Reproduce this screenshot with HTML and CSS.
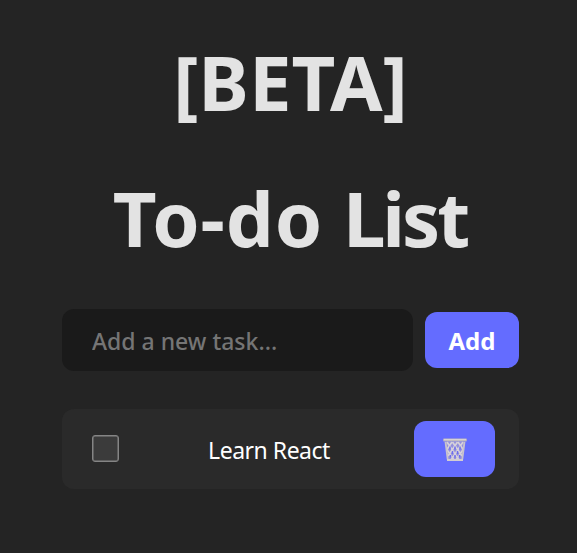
FILE: index.html
```html
<!DOCTYPE html>
<html lang="en">
<head>
<meta charset="utf-8">
<title>To-do List</title>
<link rel="stylesheet" href="styles.css">
</head>
<body>
<main class="app">
  <h1 class="title title-beta">[BETA]</h1>
  <h1 class="title title-name"><span class="word-wide">To-do</span> <span class="word-tight">List</span></h1>
  <form class="task-form">
    <input class="task-input" type="text" placeholder="Add a new task...">
    <button class="button add-button" type="button">Add</button>
  </form>
  <ul class="task-list">
    <li class="task">
      <input class="task-check" type="checkbox" aria-label="Done">
      <span class="task-name">Learn React</span>
      <button class="button delete-button" type="button" aria-label="Delete">
        <svg class="trash" width="26" height="26" viewBox="0 0 26 26" fill="none">
          <path d="M3.2 4.5 5.5 23H20.5L22.8 4.5Z" fill="#a39bd2" fill-opacity=".75"/>
          <path d="M5 5 17 23M10.500 5 20 19M16 5 21.500 13M4.500 12 12 23M21 5 9 23M15.500 5 6 19M10 5 4.500 13M21.500 12 14 23" stroke="#d6d1da" stroke-width="1.700"/>
          <path d="M8 9.500v3M13 9.500v3M18 9.500v3M10.500 14v3M15.500 14v3M8.500 18v2.500M13 18v2.500M17.500 18v2.500" stroke="#6c6cf0" stroke-width="1.400"/>
          <path d="M3.500 5 5.700 22.500M22.500 5 20.300 22.500" stroke="#c9c3cc" stroke-width="1.800"/>
          <path d="M5 23H21" stroke="#d3cdd2" stroke-width="2"/>
          <rect x="1.200" y="1.500" width="23.600" height="3" rx=".7" fill="#bdb7bc"/>
          <path d="M2 2.700H24" stroke="#ddd8dc"/>
        </svg>
      </button>
    </li>
  </ul>
</main>
</body>
</html>
```

FILE: styles.css
```css
* { box-sizing: border-box; }

body {
  margin: 0;
  min-height: 553px;
  background: #242424;
  color: #fff;
  font-family: "Segoe UI", "Noto Sans", sans-serif;
  font-size: 23px;
}

.app {
  width: 457px;
  margin-left: 62px;
  padding-top: 40px;
}

.title {
  margin: 0 0 52px;
  height: 84px;
  line-height: 84px;
  font-size: 76px;
  font-weight: 700;
  text-align: center;
  white-space: nowrap;
  color: #e3e3e3;
}

.title-name { margin-bottom: 49px; }

.word-wide { letter-spacing: .9px; }

.word-tight {
  letter-spacing: -3px;
  margin-right: 1px;
}

.task-form {
  display: flex;
  align-items: center;
  gap: 12px;
  margin: 0 0 38px;
}

.task-input {
  flex: 1;
  min-width: 0;
  height: 62px;
  padding: 2px 30px 0;
  border: 0;
  border-radius: 12px;
  background: #1a1a1a;
  color: #fff;
  font: 500 23px "Segoe UI", "Noto Sans", sans-serif;
}

.task-input::placeholder { color: #757575; }

.button {
  display: flex;
  align-items: center;
  justify-content: center;
  height: 56px;
  padding: 0;
  border: 0;
  border-radius: 12px;
  background: #646cff;
  color: #fff;
  font: 700 24px "Segoe UI", "Noto Sans", sans-serif;
}

.add-button { width: 94px; }

.delete-button { width: 81px; }

.trash { margin-top: 2px; }

.task-list {
  margin: 0;
  padding: 0;
  list-style: none;
}

.task {
  display: flex;
  align-items: center;
  justify-content: space-between;
  height: 80px;
  padding: 0 24px 0 30px;
  border-radius: 12px;
  background: #2a2a2a;
}

.task-check {
  appearance: none;
  width: 27px;
  height: 27px;
  margin: 0 0 1px;
  border: 1px solid #858585;
  border-radius: 3px;
  background: #3b3b3b;
  box-shadow: inset 0 0 0 .5px #858585;
}

.task-name {
  margin: 2px 0 0 5px;
  letter-spacing: -.48px;
  white-space: nowrap;
}
```
